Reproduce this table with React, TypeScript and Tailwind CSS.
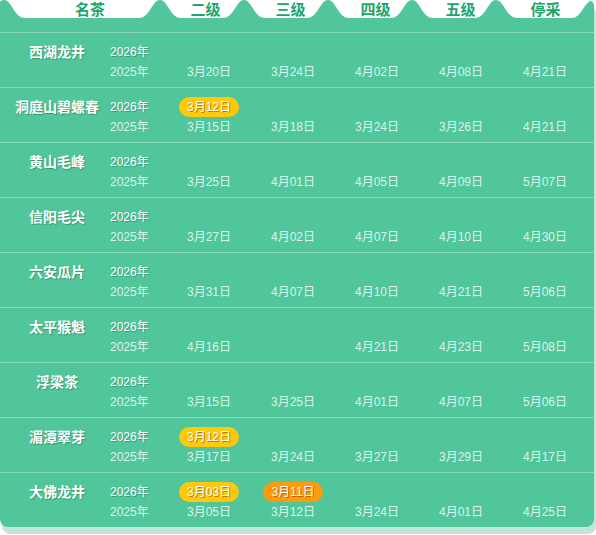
import React from "react";

type Badge = { col: number; text: string; tone: "yellow" | "orange" };
type Row = { name: string; badges: Badge[]; dates: string[] };

const rows: Row[] = [
  { name: "西湖龙井", badges: [], dates: ["3月20日", "3月24日", "4月02日", "4月08日", "4月21日"] },
  { name: "洞庭山碧螺春", badges: [{ col: 0, text: "3月12日", tone: "yellow" }], dates: ["3月15日", "3月18日", "3月24日", "3月26日", "4月21日"] },
  { name: "黄山毛峰", badges: [], dates: ["3月25日", "4月01日", "4月05日", "4月09日", "5月07日"] },
  { name: "信阳毛尖", badges: [], dates: ["3月27日", "4月02日", "4月07日", "4月10日", "4月30日"] },
  { name: "六安瓜片", badges: [], dates: ["3月31日", "4月07日", "4月10日", "4月21日", "5月06日"] },
  { name: "太平猴魁", badges: [], dates: ["4月16日", "", "4月21日", "4月23日", "5月08日"] },
  { name: "浮梁茶", badges: [], dates: ["3月15日", "3月25日", "4月01日", "4月07日", "5月06日"] },
  { name: "湄潭翠芽", badges: [{ col: 0, text: "3月12日", tone: "yellow" }], dates: ["3月17日", "3月24日", "3月27日", "3月29日", "4月17日"] },
  { name: "大佛龙井", badges: [{ col: 0, text: "3月03日", tone: "yellow" }, { col: 1, text: "3月11日", tone: "orange" }], dates: ["3月05日", "3月12日", "3月24日", "4月01日", "4月25日"] },
];

const headers = ["二级", "三级", "四级", "五级", "停采"];
const peaks = [4, 160, 244, 328, 412, 496];

function bump(p: number) {
  return `M ${p - 21} 18 C ${p - 10} 18, ${p - 8} 0, ${p} 0 C ${p + 8} 0, ${p + 10} 18, ${p + 21} 18 Z`;
}

const font = { fontFamily: '"Liberation Sans", "Noto Sans CJK SC", sans-serif' };

export default function App() {
  return (
    <div className="w-[596px] h-[535px] bg-white" style={font}>
      <div className="w-[594px] bg-[#52c69b] rounded-b-[8px] rounded-tr-[6px] shadow-[2px_7px_0_#bfe6d6] overflow-hidden">
        <div className="relative h-[32px]">
          <svg className="absolute inset-0" width="594" height="32" viewBox="0 0 594 32">
            <rect x="0" y="0" width="594" height="18" fill="#ffffff" />
            {peaks.map((p) => (
              <path key={p} d={bump(p)} fill="#52c69b" />
            ))}
            <path d="M 572 18 C 582 18, 584 0, 594 0 L 594 18 Z" fill="#52c69b" />
          </svg>
          <div className="relative grid grid-cols-[163px_repeat(5,85px)] h-[20px] leading-[20px] text-[15px] font-bold text-[#1ba56d]">
            <div className="pl-[17px] text-center">名茶</div>
            {headers.map((h) => (
              <div key={h} className="text-center">{h}</div>
            ))}
          </div>
        </div>
        {rows.map((r) => (
          <div key={r.name} className="h-[55px] border-t border-[#86d8b9] pt-[9px] grid grid-cols-[110px_57px_repeat(5,84px)] grid-rows-[20px_20px]">
            <div className="row-span-2 pl-[4px] text-center text-[14px] font-bold leading-[20px] text-white [text-shadow:1px_1px_1px_rgba(0,60,30,0.35)]">
              {r.name}
            </div>
            <div className="text-[12px] leading-[20px] text-white [text-shadow:1px_1px_0_rgba(0,60,30,0.3)]">2026年</div>
            {[0, 1, 2, 3, 4].map((c) => {
              const b = r.badges.find((x) => x.col === c);
              return (
                <div key={c} className="flex justify-center items-center">
                  {b ? (
                    <span
                      className={
                        "w-[60px] h-[20px] rounded-full flex items-center justify-center text-[12px] text-white [text-shadow:1px_1px_0_rgba(120,70,0,0.55)] " +
                        (b.tone === "yellow" ? "bg-[#ffc80a]" : "bg-[#ff9a0a]")
                      }
                    >
                      {b.text}
                    </span>
                  ) : null}
                </div>
              );
            })}
            <div className="col-start-2 text-[12px] leading-[20px] text-[#d9f4ea]">2025年</div>
            {r.dates.map((d, i) => (
              <div key={i} className="text-center text-[12px] leading-[20px] text-[#d9f4ea]">
                {d}
              </div>
            ))}
          </div>
        ))}
      </div>
    </div>
  );
}
